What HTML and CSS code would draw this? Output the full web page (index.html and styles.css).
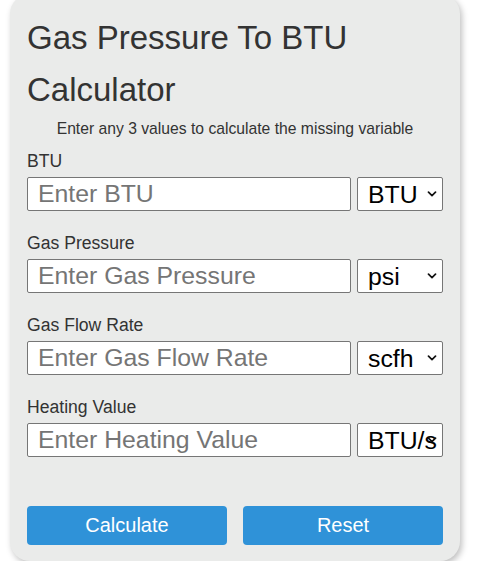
FILE: index.html
```html
<!DOCTYPE html>
<html lang="en">
<head>
<meta charset="utf-8">
<title>Gas Pressure To BTU Calculator</title>
<link rel="stylesheet" href="styles.css">
</head>
<body>
<div class="card">
  <h1 class="title">Gas Pressure To BTU Calculator</h1>
  <p class="subtitle">Enter any 3 values to calculate the missing variable</p>
  <div class="fields">
    <div class="field">
      <label class="label" for="btu">BTU</label>
      <div class="row">
        <input class="input" id="btu" type="text" placeholder="Enter BTU">
        <div class="unit-wrap">
          <select class="unit"><option>BTU</option></select>
          <svg class="chev" width="10" height="6" viewBox="0 0 10 6"><path d="M1.5 1.2 L5 4.6 L8.5 1.2" fill="none" stroke="#111" stroke-width="1.7" stroke-linecap="round" stroke-linejoin="round"/></svg>
        </div>
      </div>
    </div>
    <div class="field">
      <label class="label" for="gp">Gas Pressure</label>
      <div class="row">
        <input class="input" id="gp" type="text" placeholder="Enter Gas Pressure">
        <div class="unit-wrap">
          <select class="unit"><option>psi</option></select>
          <svg class="chev" width="10" height="6" viewBox="0 0 10 6"><path d="M1.5 1.2 L5 4.6 L8.5 1.2" fill="none" stroke="#111" stroke-width="1.7" stroke-linecap="round" stroke-linejoin="round"/></svg>
        </div>
      </div>
    </div>
    <div class="field">
      <label class="label" for="gf">Gas Flow Rate</label>
      <div class="row">
        <input class="input" id="gf" type="text" placeholder="Enter Gas Flow Rate">
        <div class="unit-wrap">
          <select class="unit"><option>scfh</option></select>
          <svg class="chev" width="10" height="6" viewBox="0 0 10 6"><path d="M1.5 1.2 L5 4.6 L8.5 1.2" fill="none" stroke="#111" stroke-width="1.7" stroke-linecap="round" stroke-linejoin="round"/></svg>
        </div>
      </div>
    </div>
    <div class="field">
      <label class="label" for="hv">Heating Value</label>
      <div class="row">
        <input class="input" id="hv" type="text" placeholder="Enter Heating Value">
        <div class="unit-wrap">
          <select class="unit"><option>BTU/scf</option></select>
          <svg class="chev" width="10" height="6" viewBox="0 0 10 6"><path d="M1.5 1.2 L5 4.6 L8.5 1.2" fill="none" stroke="#111" stroke-width="1.7" stroke-linecap="round" stroke-linejoin="round"/></svg>
        </div>
      </div>
    </div>
  </div>
  <div class="buttons">
    <button class="btn" type="button">Calculate</button>
    <button class="btn" type="button">Reset</button>
  </div>
</div>
</body>
</html>
```
FILE: styles.css
```css
html, body {
  margin: 0;
  padding: 0;
  background: #ffffff;
}
body {
  font-family: "Liberation Sans", Arial, sans-serif;
  color: #333333;
}
.card {
  width: 450px;
  box-sizing: border-box;
  margin: -6px 0 0 10px;
  padding: 18px 17px 16px;
  background: #eaebea;
  border-radius: 20px;
  box-shadow: 2px 3px 6px rgba(0, 0, 0, 0.25);
}
.title {
  margin: 0;
  font-size: 33px;
  font-weight: normal;
  line-height: 52px;
  color: #333333;
}
.subtitle {
  margin: 4px 0 0;
  font-size: 15.7px;
  line-height: 17px;
  text-align: center;
  color: #333333;
}
.fields {
  display: flex;
  flex-direction: column;
  gap: 23px;
  margin-top: 15px;
}
.field {
  display: flex;
  flex-direction: column;
  gap: 6px;
}
.label {
  font-size: 17.6px;
  line-height: 19px;
  color: #333333;
}
.row {
  display: flex;
  justify-content: space-between;
}
.input {
  flex: none;
  width: 324px;
  min-width: 0;
  box-sizing: border-box;
  height: 34px;
  margin: 0;
  padding: 0 10px;
  border: 1px solid #767676;
  border-radius: 2px;
  background: #ffffff;
  font-family: "Liberation Sans", Arial, sans-serif;
  font-size: 24.8px;
  color: #000000;
}
.input::placeholder {
  color: #757575;
}
.unit-wrap {
  position: relative;
  flex: none;
  width: 86px;
  height: 34px;
}
.unit {
  display: block;
  width: 86px;
  box-sizing: border-box;
  height: 34px;
  margin: 0;
  padding: 0 5px 0 10px;
  border: 1px solid #767676;
  border-radius: 2px;
  background: #ffffff;
  -webkit-appearance: none;
  appearance: none;
  font-family: "Liberation Sans", Arial, sans-serif;
  font-size: 24.8px;
  color: #000000;
}
.chev {
  position: absolute;
  right: 6px;
  top: 14px;
  pointer-events: none;
}
.buttons {
  display: flex;
  gap: 16px;
  margin-top: 49px;
}
.btn {
  flex: 1;
  height: 39px;
  margin: 0;
  border: none;
  border-radius: 4px;
  background: #2f92d8;
  color: #ffffff;
  font-family: "Liberation Sans", Arial, sans-serif;
  font-size: 20px;
}
```
